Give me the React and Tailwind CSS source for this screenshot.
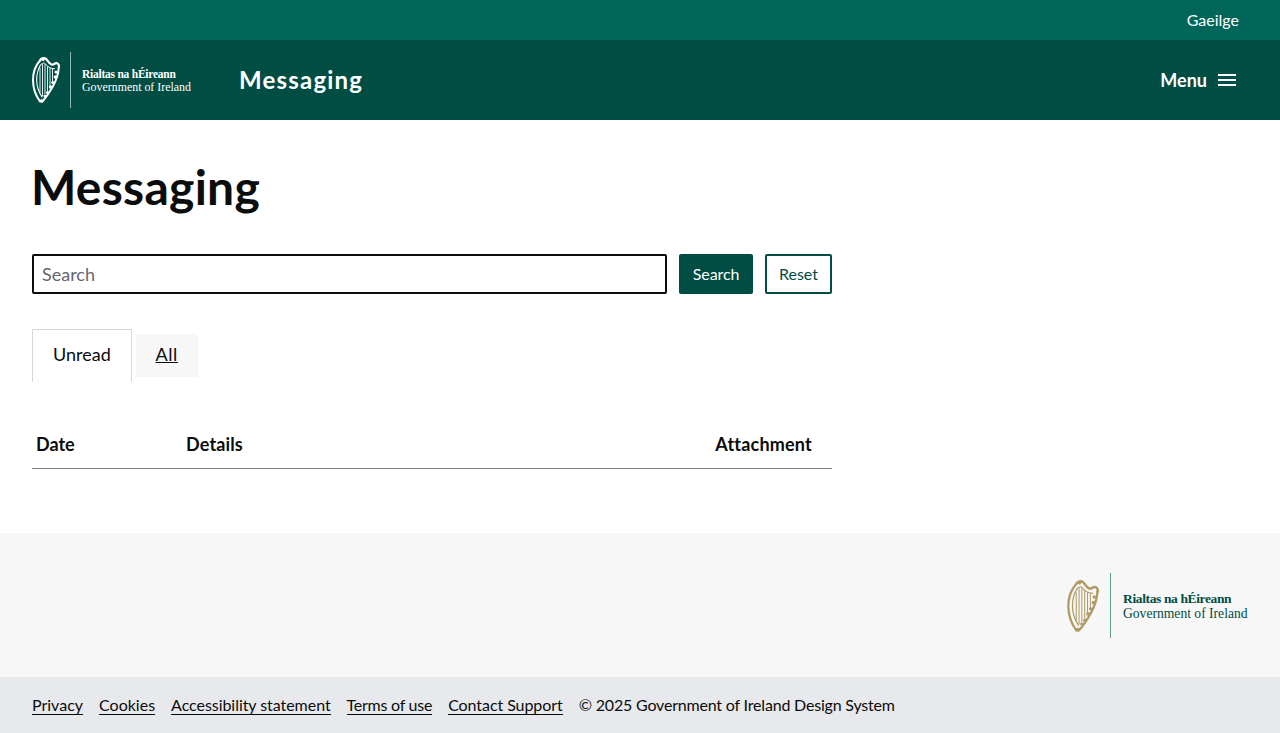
import React from 'react';

// harp emblem, used in both the header and the footer
const Harp = ({ color, className }) => {
  return (
    <svg viewBox="0 0 28 46" className={className} fill="none" stroke={color} strokeLinecap="round" strokeLinejoin="round">
      {/* soundbox: outer and inner arcs */}
      <path d="M8 3.500C4 8 1 15 1 23C1 31 4 39 8 44.500" strokeWidth="2" />
      <path d="M8.500 8C5.800 12.500 4.500 18 4.700 24C4.900 30 7 35.500 10 40" strokeWidth="1.100" />
      {/* crown and neck, with a dip before the right tip */}
      <path d="M8 3.500C9 1.500 11.500 .5 13.500 1.500C16 3 16.500 6.500 19.500 7.500C21.500 8.200 22.500 6 24.500 6.200C26.500 6.500 27.500 8.500 26.800 10.500" strokeWidth="2.200" />
      <path d="M8.500 8C10.500 5.500 12.500 5.500 14 7.500C16 10.500 19 11.500 22.500 11.800" strokeWidth="1" />
      {/* pillar, lumpy from the knotwork */}
      <path d="M26.800 10.500C26.300 17 24 24 20.800 29.500C18 34.500 14.500 40 10.500 44.500" strokeWidth="2" />
      <g fill={color} stroke="none">
        <circle cx="24" cy="15" r="1.500" />
        <circle cx="23.300" cy="20" r="1.700" />
        <circle cx="20.800" cy="25.500" r="1.500" />
        <circle cx="18.500" cy="30" r="1.700" />
        <circle cx="15.500" cy="35.500" r="1.500" />
        <circle cx="12.800" cy="39" r="1.300" />
        <circle cx="9.500" cy="44" r="1.800" />
        <circle cx="11" cy="2.500" r="1.600" />
      </g>
      {/* strings */}
      <path d="M8 11V36M10.500 7.500V39M13 7.500V37M15.500 10V33.500M18 11.500V30M20.500 12V25" strokeWidth=".9" />
    </svg>
  );
};

const Wordmark = ({ className, topClass, bottomClass, color }) => {
  return (
    <div className={`font-['Liberation_Serif',serif] whitespace-nowrap shrink-0 ${color} ${className}`}>
      <div className={`font-bold ${topClass}`}>Rialtas na hÉireann</div>
      <div className={bottomClass}>Government of Ireland</div>
    </div>
  );
};

const App = () => {
  const footerLink = 'border-b border-[#0b0c0c] leading-[19px]';

  return (
    <div className="min-h-[733px] flex flex-col bg-white text-[#0b0c0c] font-['Lato',sans-serif]">
      <div className="h-10 bg-[#00665a] flex items-center justify-end pr-[41px] text-white">
        <a href="#" className="text-base">Gaeilge</a>
      </div>
      <header className="h-20 bg-[#004d44] flex items-center pl-8 pr-[41px] text-white">
        <div className="flex items-center h-14 w-[159px]">
          <Harp color="#ffffff" className="w-7 h-[46px] shrink-0" />
          <div className="w-px h-14 ml-[10px] bg-white/60 shrink-0" />
          <Wordmark
            color="text-white"
            className="ml-[11px] pt-[2px]"
            topClass="text-[11.5px] leading-[13px] tracking-[-0.24px]"
            bottomClass="text-[11.9px] leading-[13px]"
          />
        </div>
        <span className="ml-12 text-2xl font-bold tracking-[1.2px]">Messaging</span>
        <button className="ml-auto flex items-center gap-2 text-lg font-bold">
          Menu
          <svg width="24" height="24" viewBox="0 0 24 24" fill="#ffffff">
            <path d="M3 18h18v-2H3v2zm0-5h18v-2H3v2zm0-7v2h18V6H3z" />
          </svg>
        </button>
      </header>
      <main className="flex-1 px-8 pt-[32px]">
        <div className="w-[800px]">
          <h1 className="text-[48px] leading-[70px] font-bold tracking-[0.25px] -ml-px">Messaging</h1>
          <form className="mt-8 flex gap-3">
            <input
              placeholder="Search"
              className="flex-1 h-10 min-w-0 border-2 border-[#0b0c0c] rounded-[2px] px-2 text-lg placeholder:text-[#65676b] outline-none"
            />
            <button type="button" className="h-10 w-[74px] bg-[#004d44] text-white rounded-[2px] tracking-[-0.1px]">Search</button>
            <button type="button" className="h-10 w-[67px] border-2 border-[#004d44] text-[#004d44] rounded-[2px]">Reset</button>
          </form>
          <div className="mt-[35px] flex items-start gap-1 text-lg">
            <div className="h-[53px] px-5 pt-[10px] border border-b-0 border-[#d5d6d8]">Unread</div>
            <a href="#" className="mt-[5px] h-[43px] w-[62px] text-center pt-[6px] bg-[#f7f7f7] underline tracking-[0.6px]">All</a>
          </div>
          <table className="mt-[39px] w-full table-fixed text-lg font-bold">
            <thead>
              <tr className="h-[47px] border-b border-[#7f7f7f]">
                <th className="w-[150px] text-left px-1">Date</th>
                <th className="text-left pl-1 tracking-[0.15px]">Details</th>
                <th className="w-[150px] text-right pr-5 tracking-[0.2px]">Attachment</th>
              </tr>
            </thead>
          </table>
        </div>
      </main>
      <div className="h-[144px] bg-[#f7f7f7] flex justify-end items-start pt-[40px] pr-8">
        <div className="flex items-center h-[65px]">
          <Harp color="#b09a63" className="w-8 h-[52px] shrink-0" />
          <div className="w-px h-[65px] ml-[11px] bg-[#5f9a90] shrink-0" />
          <Wordmark
            color="text-[#004d44]"
            className="ml-[12px] w-[125px]"
            topClass="text-[13.5px] leading-[15px] tracking-[-0.37px]"
            bottomClass="text-[13.6px] leading-[15px]"
          />
        </div>
      </div>
      <footer className="h-14 bg-[#e8e9ec] flex items-center gap-4 px-8 text-base">
        <a href="#" className={footerLink}>Privacy</a>
        <a href="#" className={footerLink}>Cookies</a>
        <a href="#" className={`${footerLink} tracking-[-0.05px]`}>Accessibility statement</a>
        <a href="#" className={`${footerLink} tracking-[-0.25px]`}>Terms of use</a>
        <a href="#" className={`${footerLink} tracking-[-0.07px]`}>Contact Support</a>
        <span className="tracking-[-0.19px]">© 2025 Government of Ireland Design System</span>
      </footer>
    </div>
  );
};

export default App;
